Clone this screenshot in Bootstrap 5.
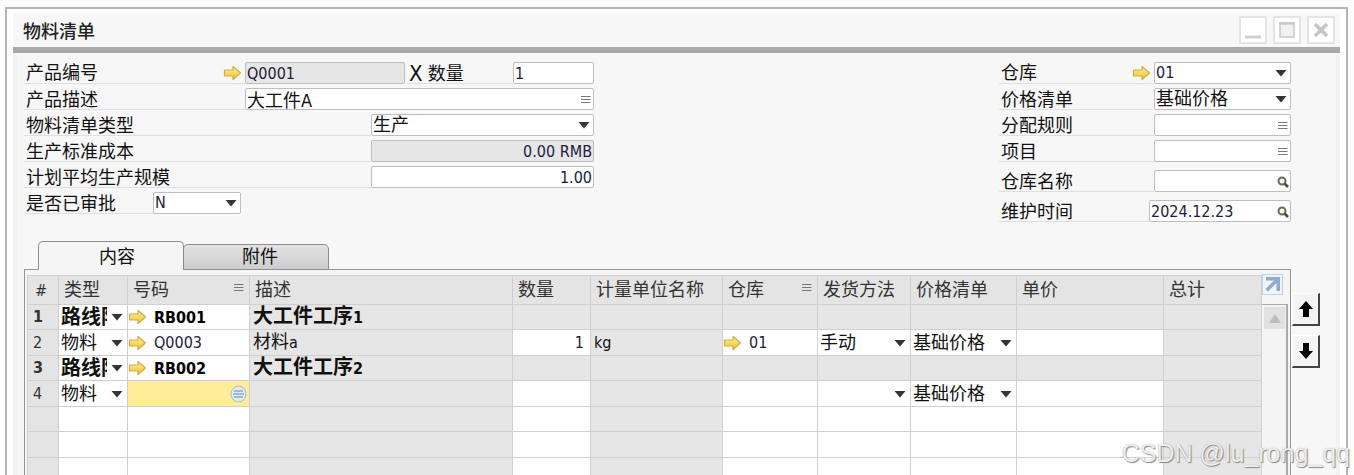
<!DOCTYPE html>
<html lang="zh-CN">
<head>
<meta charset="utf-8">
<meta name="viewport" content="width=device-width, initial-scale=1">
<title>物料清单</title>
<link href="https://cdn.jsdelivr.net/npm/bootstrap@5.3.0/dist/css/bootstrap.min.css" rel="stylesheet">
<style>
  :root {
    --line: #cfcfcf;
    --field-line: #bcbfc0;
    --grey: #e6e6e6;
    --ui: "DejaVu Sans Condensed", "Noto Sans CJK SC", sans-serif;
    --caret: url("data:image/svg+xml,%3Csvg xmlns='http://www.w3.org/2000/svg' width='12' height='8'%3E%3Cpath d='M0.5 1h11L6 7.500z' fill='%2333333b'/%3E%3C/svg%3E");
  }
  body { font-family: var(--ui); font-size: 18px; line-height: 22px; color: #111; background: #fcfcfc; height: 100vh; }
  input, select, button { font-family: inherit; line-height: inherit; }
  .win { border: 2px solid #b5b5b5; border-bottom: 0; background: #fff; padding: 4px 6px 0; margin: 7px 6px 0 5px; }
  .win-title { background: #f7f7f7; border-bottom: 6px solid #a9a9a9; height: 40px; padding: 0 5px 0 10px; }
  .win-title h1 { font-size: 18px; line-height: 22px; color: #222; padding-top: 4px; }
  .win-btns { gap: 6px; }
  .win-btn { width: 28px; height: 28px; border: 2px solid #e4e4e4; background: #fff; }
  .win-body { background: #f7f7f7; border: solid #f2f2f2; border-width: 0 4px; padding: 9px 16px 0 7px; min-height: 0; }

  .form-area { padding-right: 29px; }
  .form-left { width: 570px; gap: 4px; }
  .form-right { width: 292px; gap: 4px; }
  .form-right .spaced { margin-top: 4px; }
  .line-row { height: 22px; }
  .short-row { width: 217px; }
  .line-label { flex: 1 1 0; border-bottom: 1px solid #dcdfe4; padding: 0 3px 0 2px; height: 22px; line-height: 23px; white-space: nowrap; }
  .field { height: 22px; border: 1px solid var(--field-line); border-radius: 2px; background: #fff; padding: 0 1px; color: #1c1c3c; font-size: 16px; min-width: 0; outline-offset: -1px; line-height: 20px; }
  .field.zh { font-size: 18px; color: #111; }
  .field.off { background: var(--grey); }
  select.field, .cell-select { appearance: none; background: #fff var(--caret) no-repeat right 3px center; }
  .w-80x { width: 81px; }
  .w-88x { width: 88px; }
  .w-137x { width: 137px; }
  .w-142x { width: 142px; }
  .w-160x { width: 160px; }
  .w-223x { width: 223px; }
  .w-349x { width: 349px; }
  .qty-label { flex: 0 0 106px; margin-left: 2px; }
  .times { font-size: 22px; line-height: 20px; vertical-align: -1px; }
  .holder { position: relative; display: flex; }
  .holder .field { width: 100%; padding-right: 20px; }
  .holder .mark-btn { position: absolute; right: 2px; top: 5px; }
  .mark-btn { border: 0; background: none; padding: 0; width: 13px; height: 13px; display: flex; align-items: center; justify-content: center; }
  .arrow { flex: none; width: 19px; height: 16px; }

  .tabs-row { margin: 19px 0 -1px 14px; border: 0; position: relative; }
  .tabs-row .nav-link { border: 1px solid #8d8d8d; border-radius: 5px 5px 0 0; width: 146px; color: #111; padding: 0 0 0 8px; margin: 0; height: 26px; background: linear-gradient(#e3e3e3, #cdcdcd); }
  .tabs-row .nav-link.active { height: 29px; background: #f5f5f5; border-color: #8d8d8d #8d8d8d #f5f5f5; color: #111; padding-top: 2px; padding-left: 12px; }
  .tabs-row .nav-item + .nav-item { margin-left: -1px; }
  .panel { border: 1px solid #949494; border-bottom: 0; background: #f5f5f5; padding: 5px 2px 0; overflow: hidden; }
  .grid-table { table-layout: fixed; width: 100%; border-collapse: separate; border-spacing: 0; border-top: 1px solid var(--line); border-left: 1px solid var(--line); }
  .grid-table th, .grid-table td { border: solid var(--line); border-width: 0 1px 1px 0; padding: 0 2px 0 3px; height: 25px; overflow: hidden; white-space: nowrap; background: #fff; vertical-align: middle; font-weight: 400; }
  .grid-table tbody tr:nth-child(even) > * { height: 26px; }
  .grid-table thead th { height: 29px; padding: 0 5px; color: #333; background: #e4e4e4; }
  .grid-table thead th:first-child { padding-left: 7px; }
  .grid-table .off { background: var(--grey); }
  .grid-table tbody th { background: #e4e4e4; font-size: 16px; color: #333; padding: 0 5px; }
  .grid-table tr.stage > th, .grid-table tr.stage > td { font-weight: 700; }
  .grid-table tr.stage .big { font-size: 20px; }
  .grid-table td.drop { padding: 0; }
  .grid-table td.linked { padding: 0; }
  .linked > div { gap: 7px; }
  .cell-select { display: block; width: 100%; height: 24px; border: 0; padding: 0 20px 0 2px; font-weight: inherit; font-size: 18px; color: #111; background-position: right 4px center; }
  .cell-input { border: 0; background: transparent; padding: 0; min-width: 0; width: 100%; height: 24px; font-size: 16px; font-weight: inherit; color: #1c1c3c; }
  .lat { font-size: 16px; }
  .grid-table td.picked { background: #ffed98; }
  .gutter { width: 26px; }
  .expand { width: 21px; height: 21px; border: 1px solid #bcd4ea; background: #eef4fa; padding: 0; margin-top: -1px; }
  .gutter-head { height: 29px; }
  .track { border: 1px solid #aaa; border-width: 1px 2px 0 0; background: #f4f4f4; padding: 2px; }
  .track-up { width: 21px; height: 22px; background: #e1e1e1; border: 0; padding: 0; }
  .move-btns { padding: 71px 0 0 1px; gap: 9px; }
  .move { width: 28px; height: 33px; border: solid; border-width: 1px 2px 2px 1px; border-color: #fff #444 #444 #fff; background: #f4f4f4; padding: 0; }
  .stamp { position: absolute; right: 4px; bottom: 8px; font: 25px/28px "Liberation Sans", sans-serif; color: rgba(255,255,255,.85); text-shadow: 1px 1px 1px #888, 0 0 1px #999; pointer-events: none; }
</style>
</head>
<body class="d-flex flex-column overflow-hidden position-relative">

<svg width="0" height="0" class="position-absolute" aria-hidden="true">
  <defs>
    <linearGradient id="gold" x1="0" y1="0" x2="0" y2="1"><stop offset="0" stop-color="#fff3a0"/><stop offset="1" stop-color="#efc21c"/></linearGradient>
    <symbol id="i-arrow" viewBox="0 0 19 16"><path d="M1.500 5h8.500V1.500L17.500 8 10 14.500V11H1.500z" fill="url(#gold)" stroke="#d2a94a" stroke-width="1.200" stroke-linejoin="round"/></symbol>
    <symbol id="i-lines" viewBox="0 0 10 10"><path d="M0 1.500h9.500M0 4.500h9.500M0 7.500h9.500" stroke="#777" stroke-width="1"/></symbol>
    <symbol id="i-lens" viewBox="0 0 12 12"><circle cx="5" cy="5" r="3.500" fill="#f4f4ec" stroke="#6b6b58" stroke-width="2"/><path d="M7.500 7.500L11 11" stroke="#4b4b3b" stroke-width="2.500"/></symbol>
  </defs>
</svg>

<main class="win d-flex flex-column flex-grow-1 overflow-hidden">
  <header class="win-title d-flex align-items-center justify-content-between flex-shrink-0">
    <h1 class="m-0">物料清单</h1>
    <div class="win-btns d-flex">
      <button class="win-btn p-0 d-flex" aria-label="最小化"><svg width="24" height="24"><path d="M4 19h16" stroke="#cfcfcf" stroke-width="3"/></svg></button>
      <button class="win-btn p-0 d-flex" aria-label="最大化"><svg width="24" height="24"><path d="M5 5h14v14H5z" fill="#f1f1f1" stroke="#c8c8c8" stroke-width="1.500"/><path d="M4 5.500h16" stroke="#c8c8c8" stroke-width="2.500"/></svg></button>
      <button class="win-btn p-0 d-flex" aria-label="关闭"><svg width="24" height="24"><path d="M6 6l12 12M18 6L6 18" stroke="#c6c6c6" stroke-width="3.500"/><path d="M9 12h6" stroke="#c6c6c6" stroke-width="5"/></svg></button>
    </div>
  </header>

  <div class="win-body d-flex flex-column flex-grow-1">
    <form class="form-area d-flex justify-content-between flex-shrink-0">
      <div class="form-left d-flex flex-column">
        <div class="line-row d-flex">
          <label class="line-label d-flex justify-content-between align-items-center" for="code">产品编号<svg class="arrow"><use href="#i-arrow"/></svg></label>
          <input id="code" class="field off w-160x" value="Q0001" readonly>
          <label class="line-label qty-label" for="qty"><span class="times">X</span> 数量</label>
          <input id="qty" class="field w-80x" value="1">
        </div>
        <div class="line-row d-flex">
          <label class="line-label" for="desc">产品描述</label>
          <div class="holder w-349x"><input id="desc" class="field zh" value="大工件A"><button type="button" class="mark-btn" aria-label="选择描述"><svg width="10" height="10"><use href="#i-lines"/></svg></button></div>
        </div>
        <div class="line-row d-flex">
          <label class="line-label" for="kind">物料清单类型</label>
          <select id="kind" class="field zh w-223x"><option>生产</option></select>
        </div>
        <div class="line-row d-flex">
          <label class="line-label" for="cost">生产标准成本</label>
          <input id="cost" class="field off w-223x text-end" value="0.00 RMB" readonly>
        </div>
        <div class="line-row d-flex">
          <label class="line-label" for="scale">计划平均生产规模</label>
          <input id="scale" class="field w-223x text-end" value="1.00">
        </div>
        <div class="line-row short-row d-flex">
          <label class="line-label" for="ok">是否已审批</label>
          <select id="ok" class="field w-88x"><option>N</option></select>
        </div>
      </div>

      <div class="form-right d-flex flex-column">
        <div class="line-row d-flex">
          <label class="line-label d-flex justify-content-between align-items-center" for="wh">仓库<svg class="arrow"><use href="#i-arrow"/></svg></label>
          <select id="wh" class="field w-137x"><option>01</option></select>
        </div>
        <div class="line-row d-flex">
          <label class="line-label" for="price">价格清单</label>
          <select id="price" class="field zh w-137x"><option>基础价格</option></select>
        </div>
        <div class="line-row d-flex">
          <label class="line-label" for="rule">分配规则</label>
          <div class="holder w-137x"><input id="rule" class="field"><button type="button" class="mark-btn" aria-label="选择规则"><svg width="10" height="10"><use href="#i-lines"/></svg></button></div>
        </div>
        <div class="line-row d-flex">
          <label class="line-label" for="proj">项目</label>
          <div class="holder w-137x"><input id="proj" class="field"><button type="button" class="mark-btn" aria-label="选择项目"><svg width="10" height="10"><use href="#i-lines"/></svg></button></div>
        </div>
        <div class="line-row spaced d-flex">
          <label class="line-label" for="whname">仓库名称</label>
          <div class="holder w-137x"><input id="whname" class="field"><button type="button" class="mark-btn" aria-label="查找仓库"><svg width="12" height="12"><use href="#i-lens"/></svg></button></div>
        </div>
        <div class="line-row spaced d-flex">
          <label class="line-label" for="date">维护时间</label>
          <div class="holder w-142x"><input id="date" class="field" value="2024.12.23"><button type="button" class="mark-btn" aria-label="查找日期"><svg width="12" height="12"><use href="#i-lens"/></svg></button></div>
        </div>
      </div>
    </form>

    <div class="d-flex flex-grow-1" style="min-height:0">
      <div class="d-flex flex-column flex-grow-1">
        <ul class="nav nav-tabs tabs-row align-items-end flex-shrink-0">
          <li class="nav-item"><button class="nav-link active">内容</button></li>
          <li class="nav-item"><button class="nav-link">附件</button></li>
        </ul>
        <div class="panel d-flex flex-grow-1">
          <div class="flex-grow-1">
            <table class="grid-table">
              <colgroup><col style="width:31px"><col style="width:69px"><col style="width:122px"><col><col style="width:78px"><col style="width:132px"><col style="width:95px"><col style="width:93px"><col style="width:106px"><col style="width:147px"><col style="width:98px"></colgroup>
              <thead>
                <tr>
                  <th scope="col"><span class="lat">#</span></th><th scope="col">类型</th>
                  <th scope="col"><span class="d-flex justify-content-between">号码<svg class="mt-1" width="10" height="10"><use href="#i-lines"/></svg></span></th>
                  <th scope="col">描述</th><th scope="col">数量</th><th scope="col">计量单位名称</th>
                  <th scope="col"><span class="d-flex justify-content-between">仓库<svg class="mt-1" width="10" height="10"><use href="#i-lines"/></svg></span></th>
                  <th scope="col">发货方法</th><th scope="col">价格清单</th><th scope="col">单价</th><th scope="col">总计</th>
                </tr>
              </thead>
              <tbody>
                <tr class="stage">
                  <th scope="row">1</th>
                  <td class="drop"><select class="cell-select big" aria-label="类型"><option>路线阶段</option></select></td>
                  <td class="linked"><div class="d-flex align-items-center"><svg class="arrow"><use href="#i-arrow"/></svg><input class="cell-input text-black" aria-label="号码" value="RB001"></div></td>
                  <td class="off"><span class="big">大工件工序</span><span class="lat">1</span></td>
                  <td class="off"></td><td class="off"></td><td class="off"></td><td class="off"></td><td class="off"></td><td class="off"></td><td class="off"></td>
                </tr>
                <tr>
                  <th scope="row">2</th>
                  <td class="drop"><select class="cell-select" aria-label="类型"><option>物料</option></select></td>
                  <td class="linked"><div class="d-flex align-items-center"><svg class="arrow"><use href="#i-arrow"/></svg><input class="cell-input" aria-label="号码" value="Q0003"></div></td>
                  <td class="off">材料<span class="lat">a</span></td>
                  <td><input class="cell-input text-end pe-1" aria-label="数量" value="1"></td>
                  <td class="off"><span class="lat">kg</span></td>
                  <td class="linked"><div class="d-flex align-items-center"><svg class="arrow"><use href="#i-arrow"/></svg><input class="cell-input" aria-label="仓库" value="01"></div></td>
                  <td class="drop"><select class="cell-select" aria-label="发货方法"><option>手动</option></select></td>
                  <td class="drop"><select class="cell-select" aria-label="价格清单"><option>基础价格</option></select></td>
                  <td></td><td class="off"></td>
                </tr>
                <tr class="stage">
                  <th scope="row">3</th>
                  <td class="drop"><select class="cell-select big" aria-label="类型"><option>路线阶段</option></select></td>
                  <td class="linked"><div class="d-flex align-items-center"><svg class="arrow"><use href="#i-arrow"/></svg><input class="cell-input text-black" aria-label="号码" value="RB002"></div></td>
                  <td class="off"><span class="big">大工件工序</span><span class="lat">2</span></td>
                  <td class="off"></td><td class="off"></td><td class="off"></td><td class="off"></td><td class="off"></td><td class="off"></td><td class="off"></td>
                </tr>
                <tr>
                  <th scope="row">4</th>
                  <td class="drop"><select class="cell-select" aria-label="类型"><option>物料</option></select></td>
                  <td class="picked"><div class="d-flex align-items-center"><input class="cell-input" aria-label="号码"><svg class="flex-shrink-0" width="17" height="18"><ellipse cx="8.500" cy="9" rx="7.500" ry="8" fill="#dfe9f2" stroke="#a9b9c6"/><path d="M4 6h9M3 9h11M4 12h9" stroke="#85a9cf" stroke-width="1.300"/></svg></div></td>
                  <td class="off"></td><td></td><td class="off"></td><td></td>
                  <td class="drop"><select class="cell-select" aria-label="发货方法"><option></option></select></td>
                  <td class="drop"><select class="cell-select" aria-label="价格清单"><option>基础价格</option></select></td>
                  <td></td><td class="off"></td>
                </tr>
                <tr><th></th><td></td><td></td><td class="off"></td><td></td><td class="off"></td><td></td><td></td><td></td><td></td><td class="off"></td></tr>
                <tr><th></th><td></td><td></td><td class="off"></td><td></td><td class="off"></td><td></td><td></td><td></td><td></td><td class="off"></td></tr>
                <tr><th></th><td></td><td></td><td class="off"></td><td></td><td class="off"></td><td></td><td></td><td></td><td></td><td class="off"></td></tr>
              </tbody>
            </table>
          </div>
          <div class="gutter d-flex flex-column flex-shrink-0">
            <div class="gutter-head flex-shrink-0"><button class="expand d-flex" aria-label="展开表格"><svg width="19" height="19"><path d="M3 2h14v14h-3.500V8L5 16.500 2.500 14 11 5.500H3z" fill="#8fabd0"/></svg></button></div>
            <div class="track flex-grow-1"><button class="track-up d-flex align-items-center justify-content-center" aria-label="向上滚动"><svg width="12" height="9"><path d="M0 9L6 0l6 9z" fill="#bdbdbd"/></svg></button></div>
          </div>
        </div>
      </div>
      <div class="move-btns d-flex flex-column justify-content-start">
        <button class="move" aria-label="上移"><svg class="d-block mx-auto" width="16" height="18"><path d="M8 1L15 9h-4v8H5V9H1z" fill="#000"/></svg></button>
        <button class="move" aria-label="下移"><svg class="d-block mx-auto" width="16" height="18"><path d="M8 17L15 9h-4V1H5v8H1z" fill="#000"/></svg></button>
      </div>
    </div>
  </div>
</main>
<div class="stamp">CSDN @lu_rong_qq</div>

<script src="https://cdn.jsdelivr.net/npm/bootstrap@5.3.0/dist/js/bootstrap.bundle.min.js"></script>
</body>
</html>
